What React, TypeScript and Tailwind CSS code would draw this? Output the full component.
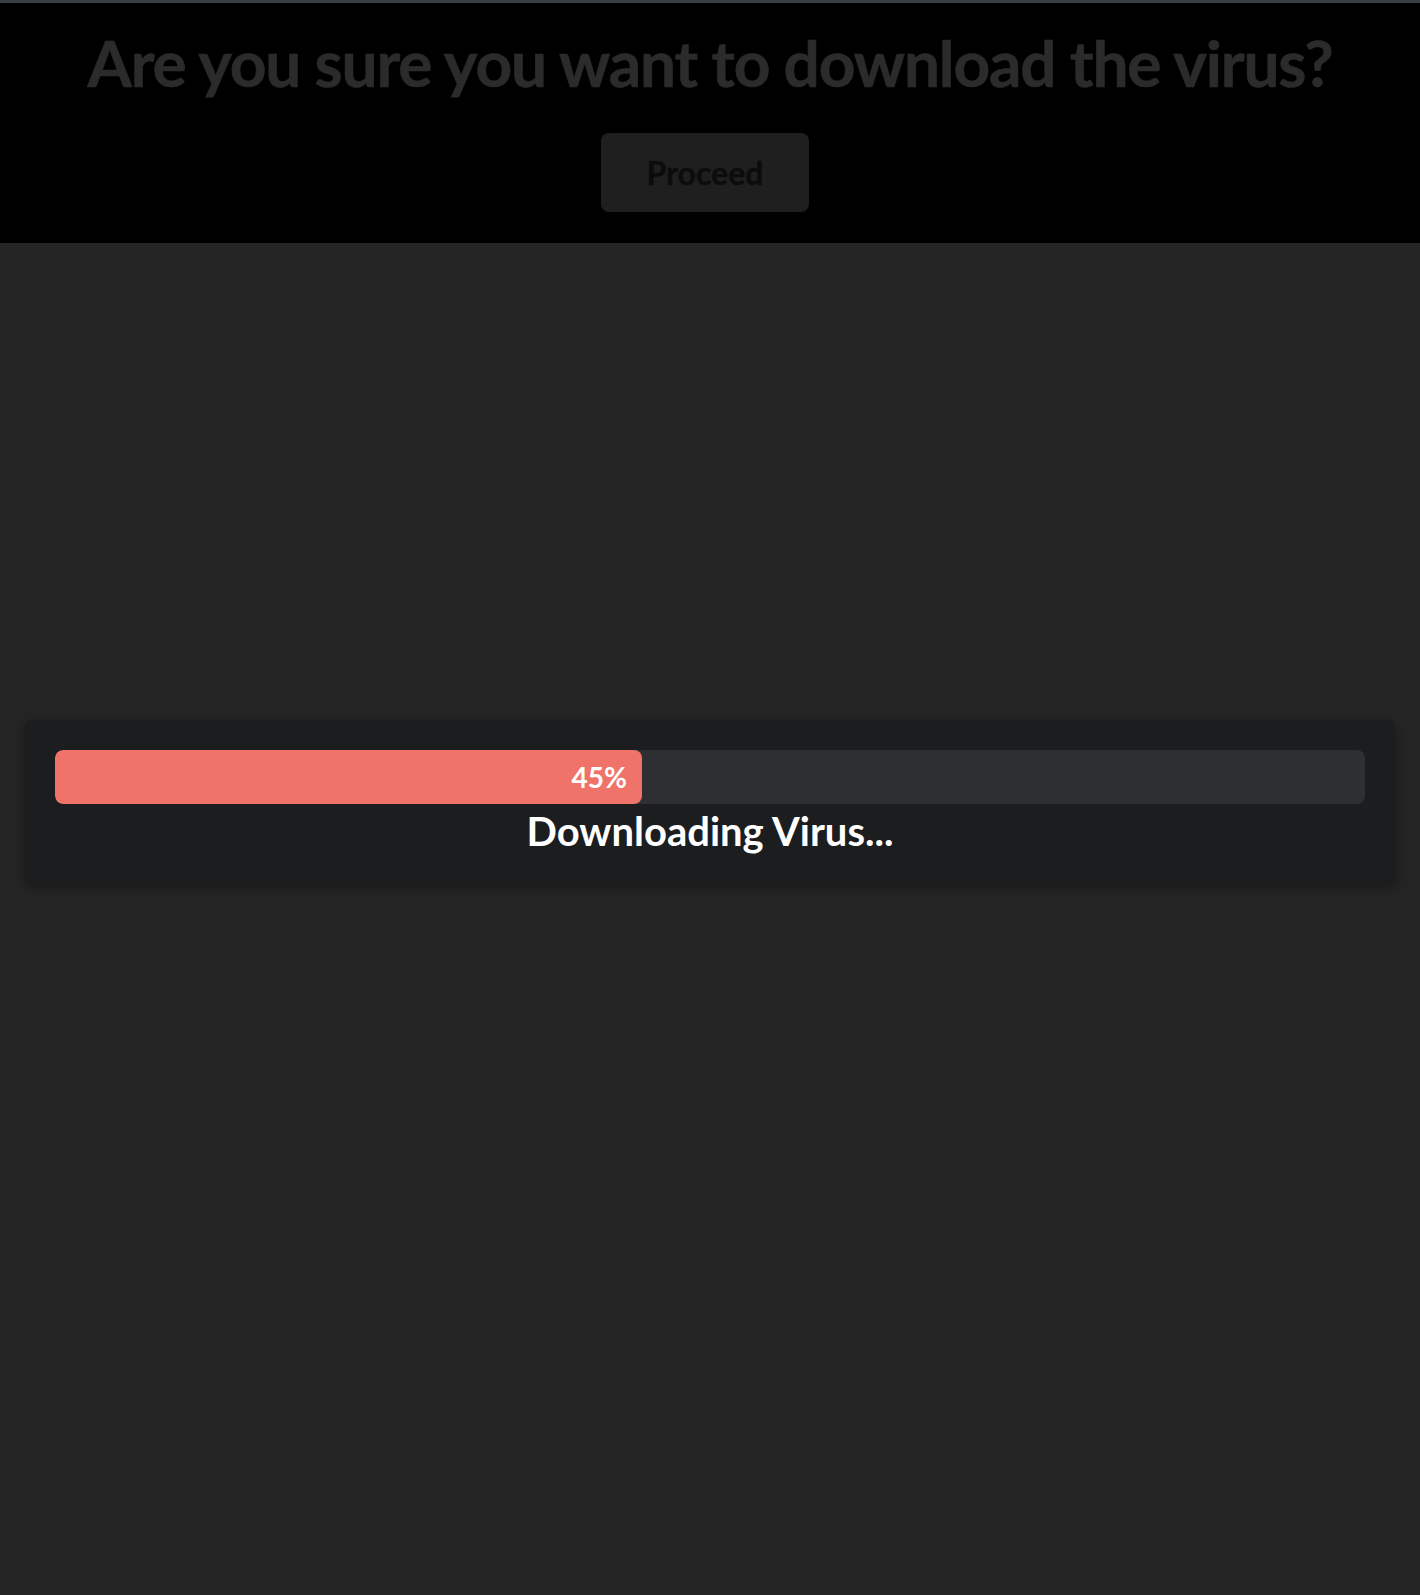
import React from 'react'

const progress = 45

const App = () => {
  return (
    <div className="min-h-screen bg-[#252525] font-['Lato',_'Noto_Sans',_sans-serif]">
      <header className="border-t-[3px] border-[#3c4043] bg-black pt-[28px] pb-[31px] flex flex-col items-center">
        <h1 className="text-[64px] leading-[64px] font-bold text-[#2b2b2b] tracking-[-1.2px] [-webkit-text-stroke:0.6px_#2b2b2b]">
          Are you sure you want to download the virus?
        </h1>
        <button className="mt-[38px] mr-[10px] w-[208px] h-[79px] rounded-lg bg-[#1f1f1f] text-[32px] font-bold text-[#0c0c0c] [-webkit-text-stroke:0.4px_#0c0c0c]">
          Proceed
        </button>
      </header>

      <div className="px-[25px] pt-[477px]">
        <div className="rounded-md bg-[#1c1d1f] px-[30px] pt-[30px] pb-[30px] shadow-[0_4px_14px_rgba(0,0,0,0.35)]">
          <div className="h-[54px] rounded-lg bg-[#2e2f32] overflow-hidden">
            <div
              className="h-full rounded-lg bg-[#ef7369] flex items-center justify-end pr-[15px]"
              style={{ width: `${progress - 0.2}%` }}
            >
              <span className="text-[28px] font-bold text-white">{progress}%</span>
            </div>
          </div>
          <p className="text-center text-[40px] leading-[46px] font-bold text-white mt-[4px]">
            Downloading Virus...
          </p>
        </div>
      </div>
    </div>
  )
}

export default App
